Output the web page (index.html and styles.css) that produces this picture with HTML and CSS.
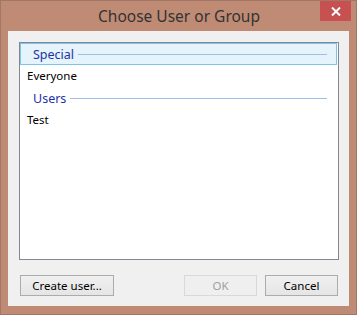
FILE: index.html
```html
<!DOCTYPE html>
<html>
<head>
<meta charset="utf-8">
<link rel="stylesheet" href="styles.css">
</head>
<body>
<div class="window">
  <div class="titlebar">
    <div class="title">Choose User or Group</div>
    <div class="close"><svg width="10" height="9" viewBox="0 0 10 9"><path d="M1 0.5 L9 8.5 M9 0.5 L1 8.5" stroke="#fff" stroke-width="2"/></svg></div>
  </div>
  <div class="client">
    <div class="listbox">
      <div class="group selected"><span class="gname">Special</span><span class="gline"></span></div>
      <div class="item">Everyone</div>
      <div class="group"><span class="gname">Users</span><span class="gline"></span></div>
      <div class="item">Test</div>
    </div>
    <div class="buttons">
      <button class="btn create">Create user...</button>
      <div class="spacer"></div>
      <button class="btn ok" disabled>OK</button>
      <button class="btn cancel">Cancel</button>
    </div>
  </div>
</div>
</body>
</html>
```

FILE: styles.css
```css
html, body {
  margin: 0;
  padding: 0;
  background: #ffffff;
}
.window {
  width: 357px;
  height: 315px;
  box-sizing: border-box;
  border: 1px solid #a27766;
  background: #c08b74;
  display: flex;
  flex-direction: column;
  font-family: "Noto Sans", "Open Sans", sans-serif;
}
.titlebar {
  height: 30px;
  position: relative;
  display: flex;
  align-items: center;
  justify-content: center;
}
.title {
  font-size: 15.5px;
  color: #333333;
  margin-top: 0;
  margin-left: 1px;
}
.close {
  position: absolute;
  right: 5px;
  top: 0;
  width: 31px;
  height: 20px;
  background: #c75050;
  display: flex;
  align-items: center;
  justify-content: center;
}
.client {
  margin: 0 7px 0 7px;
  height: 275px;
  background: #f0f0f0;
  box-sizing: border-box;
  padding: 11px 10px 0 11px;
  display: flex;
  flex-direction: column;
}
.listbox {
  width: 320px;
  height: 218px;
  box-sizing: border-box;
  border: 1px solid #828790;
  background: #ffffff;
  padding: 0 1px 0 0;
}
.group {
  height: 22px;
  box-sizing: border-box;
  display: flex;
  align-items: center;
  padding: 0 9px 0 12px;
  border: 1px solid transparent;
}
.group.selected {
  background: #e5f3fb;
  border-color: #7cc3ee;
}
.gname {
  font-size: 12.5px;
  color: #2232a6;
  margin-right: 4px;
}
.gline {
  flex: 1;
  height: 1px;
  background: #a0bde7;
  margin-top: 1px;
}
.item {
  height: 22px;
  display: flex;
  align-items: center;
  padding-left: 7px;
  font-size: 11.5px;
  color: #000000;
  padding-bottom: 1px;
  box-sizing: border-box;
}
.buttons {
  display: flex;
  margin-top: 15px;
  padding-left: 1px;
  gap: 8px;
}
.spacer {
  flex: 1;
}
.btn {
  height: 21px;
  box-sizing: border-box;
  border: 1px solid #acacac;
  background: linear-gradient(#f0f0f0, #e5e5e5);
  font-family: "Noto Sans", "Open Sans", sans-serif;
  font-size: 11.5px;
  color: #000000;
  padding: 0;
  margin: 0;
}
.create { width: 94px; }
.ok {
  width: 73px;
  border-color: #d9d9d9;
  background: #efefef;
  color: #a0a0a0;
}
.cancel { width: 73px; margin-right: 1px; }
```
